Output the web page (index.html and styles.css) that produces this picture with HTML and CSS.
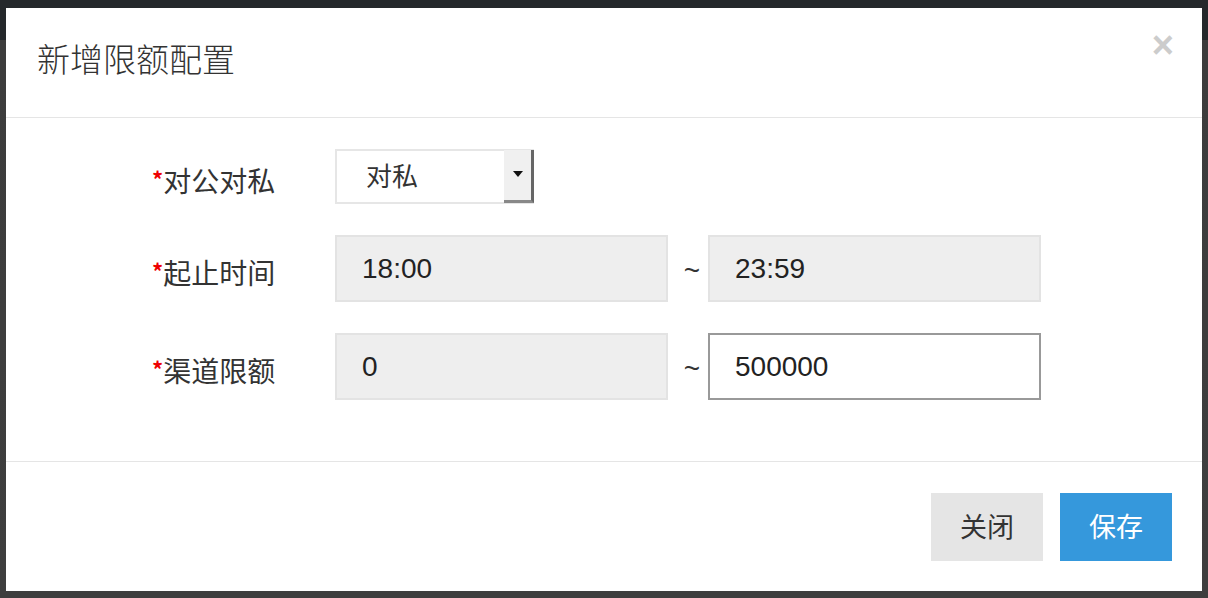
FILE: index.html
```html
<!DOCTYPE html>
<html lang="zh-CN">
<head>
    <meta charset="UTF-8">
    <meta name="viewport" content="width=device-width, initial-scale=1.0">
    <title>新增限额配置</title>
    <link rel="stylesheet" href="styles.css">
</head>
<body>
    <div class="modal">
        <div class="modal-header">
            <h2>新增限额配置</h2>
            <span class="close">&times;</span>
        </div>

        <div class="modal-body">
            <div class="row">
                <label><i>*</i>对公对私</label>
                <div class="select">
                    <span>对私</span>
                    <span class="arrow"></span>
                </div>
            </div>
            <div class="row">
                <label><i>*</i>起止时间</label>
                <div class="field disabled">18:00</div>
                <span class="tilde">~</span>
                <div class="field disabled">23:59</div>
            </div>
            <div class="row">
                <label><i>*</i>渠道限额</label>
                <div class="field disabled">0</div>
                <span class="tilde">~</span>
                <div class="field">500000</div>
            </div>
        </div>

        <div class="modal-footer">
            <button class="btn btn-default">关闭</button>
            <button class="btn btn-primary">保存</button>
        </div>
    </div>
</body>
</html>
```

FILE: styles.css
```css
html, body {
    margin: 0;
    padding: 0;
}
body {
    width: 1208px;
    height: 598px;
    box-sizing: border-box;
    padding: 8px 6px 7px;
    background: linear-gradient(#25282b 0, #25282b 40px, #3c3c3c 40px, #3e3e3e 100%);
    font-family: "Noto Sans CJK SC", "Noto Sans", sans-serif;
    color: #333;
    overflow: hidden;
}
.modal {
    background-color: #fff;
    width: 1196px;
    height: 583px;
    display: flex;
    flex-direction: column;
}
.modal-header {
    height: 109px;
    border-bottom: 1px solid #e5e5e5;
    display: flex;
    align-items: center;
    justify-content: space-between;
    padding: 0 28px 0 31px;
}
.modal-header h2 {
    margin: 0 0 10px;
    font-size: 33px;
    font-weight: 300;
    color: #333;
}
.close {
    font-family: "Liberation Sans", Arial, sans-serif;
    font-size: 38px;
    font-weight: bold;
    color: #cccccc;
    margin-top: -34px;
}
.modal-body {
    padding: 31px 0 61px 146px;
    display: flex;
    flex-direction: column;
    gap: 31px;
}
.row {
    display: flex;
    align-items: center;
}
.row label {
    width: 183px;
    font-size: 28px;
    color: #333;
    margin-top: 6px;
}
.row label i {
    font-style: normal;
    font-weight: bold;
    color: #e00;
    font-size: 22px;
    vertical-align: 4px;
}
.select {
    width: 199px;
    height: 55px;
    box-sizing: border-box;
    border: 2px solid #e6e6e6;
    display: flex;
    align-items: center;
    justify-content: space-between;
    font-size: 26px;
    padding-left: 29px;
}
.select span:first-child {
    margin-top: -4px;
}
.arrow {
    width: 30px;
    height: 53px;
    margin: -2px -2px -2px 0;
    box-sizing: border-box;
    background-color: #f0f0f0;
    border-right: 3px solid #666;
    border-bottom: 3px solid #888;
    position: relative;
}
.arrow::after {
    content: "";
    position: absolute;
    left: 9px;
    top: 21px;
    border-left: 5px solid transparent;
    border-right: 5px solid transparent;
    border-top: 6px solid #111;
}
.field {
    width: 333px;
    height: 67px;
    box-sizing: border-box;
    border: 2px solid #999;
    background-color: #fff;
    padding-left: 25px;
    display: flex;
    align-items: center;
    font-family: "Liberation Sans", Arial, sans-serif;
    font-size: 28px;
    color: #222;
}
.field.disabled {
    background-color: #eee;
    border-color: #e3e3e3;
}
.tilde {
    width: 40px;
    box-sizing: border-box;
    padding-left: 8px;
    text-align: center;
    font-family: "Liberation Sans", Arial, sans-serif;
    font-size: 28px;
    margin-top: 4px;
}
.modal-footer {
    border-top: 1px solid #e5e5e5;
    padding: 31px 30px 30px;
    display: flex;
    justify-content: flex-end;
    gap: 17px;
}
.btn {
    width: 112px;
    height: 68px;
    border: none;
    padding-bottom: 4px;
    font-family: "Noto Sans CJK SC", "Noto Sans", sans-serif;
    font-size: 27px;
    cursor: pointer;
}
.btn-default {
    background-color: #e5e5e5;
    color: #333;
}
.btn-primary {
    background-color: #3598dc;
    color: #fff;
}
```
